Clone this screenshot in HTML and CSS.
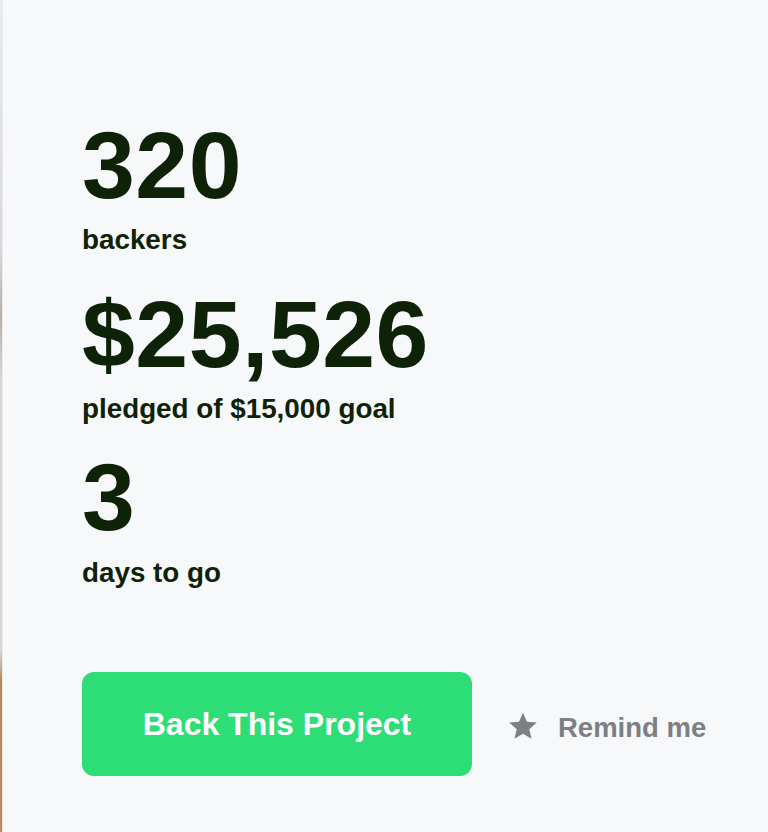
FILE: index.html
```html
<!DOCTYPE html>
<html lang="en">
<head>
<meta charset="utf-8">
<title>Project stats</title>
<link rel="stylesheet" href="styles.css">
</head>
<body>
<div class="page">
  <div class="edge"></div>
  <main class="stats">
    <div class="stat">
      <div class="num">320</div>
      <div class="label">backers</div>
    </div>
    <div class="stat stat-pledged">
      <div class="num">$25,526</div>
      <div class="label">pledged of $15,000 goal</div>
    </div>
    <div class="stat stat-days">
      <div class="num">3</div>
      <div class="label label-days">days to go</div>
    </div>
    <div class="actions">
      <button class="back">Back This Project</button>
      <a class="remind" href="#">
        <svg class="star" viewBox="0 0 24 24" width="28" height="28" aria-hidden="true"><path d="M12 0.6l3.4 7.7 8.4.8-6.4 5.6 1.9 8.3L12 18.6 4.7 23l1.9-8.3L.2 9.1l8.4-.8z"/></svg>
        <span class="remind-text">Remind me</span>
      </a>
    </div>
  </main>
</div>
</body>
</html>
```
FILE: styles.css
```css
html, body {
  margin: 0;
  padding: 0;
}
body {
  background: #f7f8fa;
  font-family: "Liberation Sans", Arial, sans-serif;
  color: #0e2207;
}
.page {
  display: flex;
  min-height: 832px;
  width: 768px;
  overflow: hidden;
}
.edge {
  width: 2px;
  flex: none;
  background: linear-gradient(to bottom, #e9eaec 0%, #d8d8da 30%, #b9aea4 38%, #d6d4d3 45%, #d9d7d6 78%, #b68553 82%, #c08b5c 100%);
  box-shadow: 1px 0 1px rgba(0,0,0,0.06);
}
.stats {
  flex: 1;
  padding: 118px 0 0 80px;
  display: flex;
  flex-direction: column;
}
.stat {
  display: flex;
  flex-direction: column;
}
.stat-pledged {
  margin-top: 31px;
}
.stat-days {
  margin-top: 25px;
}
.num {
  font-size: 95px;
  font-weight: 700;
  line-height: 95px;
  letter-spacing: 0.5px;
}
.label {
  font-size: 27.8px;
  font-weight: 700;
  line-height: 32px;
  margin-top: 11px;
}
.label-days {
  margin-top: 12px;
}
.actions {
  margin-top: 83px;
  display: flex;
  align-items: center;
}
.back {
  width: 390px;
  height: 104px;
  border: 0;
  border-radius: 12px;
  background: #2ddd76;
  color: #ffffff;
  font-family: "Liberation Sans", Arial, sans-serif;
  font-weight: 700;
  font-size: 32px;
  cursor: pointer;
  padding: 0;
}
.remind {
  display: flex;
  align-items: center;
  margin-left: 37px;
  color: #7d7f83;
  text-decoration: none;
  font-weight: 700;
  font-size: 27.5px;
}
.star {
  fill: #7d7f83;
  margin-right: 21px;
  margin-top: 4px;
}
.remind-text {
  padding-top: 8px;
}
```
